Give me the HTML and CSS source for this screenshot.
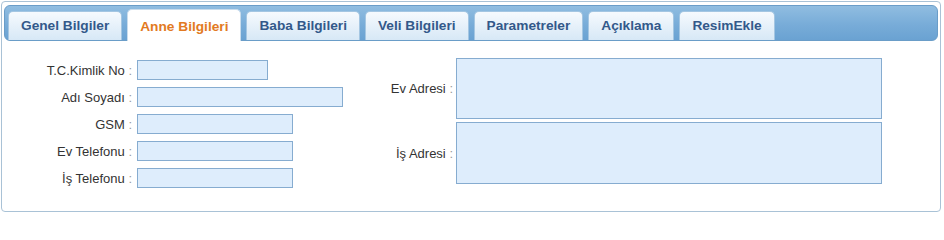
FILE: index.html
```html
<!DOCTYPE html>
<html lang="tr">
<head>
<meta charset="utf-8">
<link rel="stylesheet" href="styles.css">
</head>
<body>
<div class="panel">
  <div class="tabbar">
    <div class="tab">Genel Bilgiler</div>
    <div class="tab active">Anne Bilgileri</div>
    <div class="tab">Baba Bilgileri</div>
    <div class="tab">Veli Bilgileri</div>
    <div class="tab">Parametreler</div>
    <div class="tab">Açıklama</div>
    <div class="tab">ResimEkle</div>
  </div>
  <div class="content">
    <div class="left">
      <div class="row"><span class="label">T.C.Kimlik No <i>:</i></span><span class="input w1"></span></div>
      <div class="row"><span class="label">Adı Soyadı <i>:</i></span><span class="input w2"></span></div>
      <div class="row"><span class="label">GSM <i>:</i></span><span class="input w3"></span></div>
      <div class="row"><span class="label">Ev Telefonu <i>:</i></span><span class="input w3"></span></div>
      <div class="row"><span class="label">İş Telefonu <i>:</i></span><span class="input w3"></span></div>
    </div>
    <div class="right">
      <div class="row"><span class="label rl">Ev Adresi <i>:</i></span><span class="area"></span></div>
      <div class="row"><span class="label rl">İş Adresi <i>:</i></span><span class="area a2"></span></div>
    </div>
  </div>
</div>
</body>
</html>
```
FILE: styles.css
```css
html, body { margin: 0; padding: 0; background: #ffffff; }
body { font-family: "Liberation Sans", Arial, sans-serif; }
.panel {
  margin: 1px;
  border: 1px solid #a9c2d6;
  border-radius: 4px;
  padding: 3px 2px 0 2px;
  box-sizing: border-box;
  width: 940px;
  height: 211px;
}
.tabbar {
  height: 36px;
  box-sizing: border-box;
  border: 1px solid #6a9dc8;
  border-radius: 6px;
  background: linear-gradient(#90bde1, #78acd8 55%, #6aa2d2);
  display: flex;
  align-items: flex-end;
  gap: 5px;
  padding-left: 3px;
}
.tab {
  height: 29px;
  box-sizing: border-box;
  padding: 0 12px;
  border: 1px solid #a4c6e2;
  border-bottom: none;
  border-radius: 5px 5px 0 0;
  background: linear-gradient(#f6fafe, #e3eff9 60%, #d7e8f6);
  color: #33598a;
  font-weight: bold;
  font-size: 13.7px;
  line-height: 28px;
  white-space: nowrap;
}
.tab.active {
  height: 32px;
  margin-bottom: -1px;
  background: #ffffff;
  color: #e27a22;
  line-height: 34px;
  border-color: #c9dcec;
}
.content {
  display: flex;
  padding-top: 17px;
}
.left {
  width: 371px;
  display: flex;
  flex-direction: column;
  gap: 7px;
  padding-top: 2px;
}
.row {
  display: flex;
  align-items: center;
}
.label {
  width: 128px;
  text-align: right;
  font-size: 13px;
  color: #333333;
  margin-right: 5px;
  white-space: nowrap;
}
.label i { font-style: normal; color: #9a9a9a; }
.input {
  display: block;
  height: 20px;
  box-sizing: border-box;
  border: 1px solid #86acd0;
  background: #deedfc;
}
.w1 { width: 131px; }
.w2 { width: 206px; }
.w3 { width: 156px; }
.right {
  display: flex;
  flex-direction: column;
  gap: 3px;
}
.label.rl { width: 78px; margin-right: 3px; }
.area {
  display: block;
  width: 426px;
  height: 61px;
  box-sizing: border-box;
  border: 1px solid #86acd0;
  background: #deedfc;
}
.area.a2 { height: 62px; }
```
